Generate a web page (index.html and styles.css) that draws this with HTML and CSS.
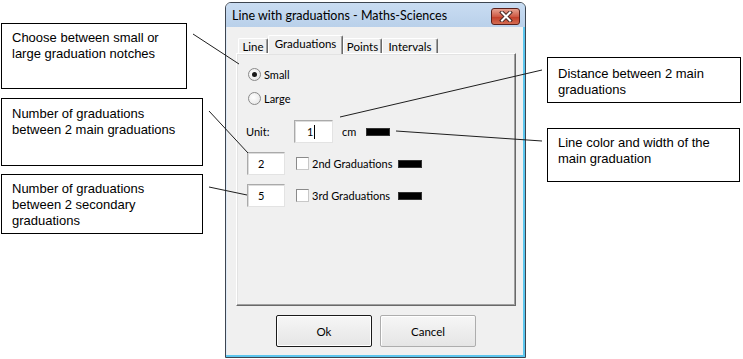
FILE: index.html
```html
<!DOCTYPE html>
<html lang="en">
<head>
    <meta charset="UTF-8">
    <meta name="viewport" content="width=device-width, initial-scale=1.0">
    <title>Line with graduations - Maths-Sciences</title>
    <link rel="stylesheet" href="styles.css">
</head>
<body>
    <div class="canvas">
        <div class="dialog">
            <div class="titlebar">
                <span class="title">Line with graduations - Maths-Sciences</span>
                <div class="close">
                    <svg width="16" height="11" viewBox="0 0 16 11">
                        <path d="M4 1.5 L12 9.5 M12 1.5 L4 9.5" stroke="#4a2a26" stroke-width="4" stroke-linecap="square"/>
                        <path d="M4 1.5 L12 9.5 M12 1.5 L4 9.5" stroke="#ffffff" stroke-width="2" stroke-linecap="square"/>
                    </svg>
                </div>
            </div>
            <div class="client">
                <div class="tabs">
                    <div class="tab tab-line">Line</div>
                    <div class="tab tab-grad active">Graduations</div>
                    <div class="tab tab-points">Points</div>
                    <div class="tab tab-intervals">Intervals</div>
                </div>
                <div class="panel">
                    <div class="radios">
                        <div class="radio-row"><span class="radio checked"></span><span>Small</span></div>
                        <div class="radio-row"><span class="radio"></span><span>Large</span></div>
                    </div>
                    <div class="row unit-row">
                        <span class="unit-label">Unit:</span>
                        <span class="field field-unit">1<span class="caret"></span></span>
                        <span class="cm">cm</span>
                        <span class="swatch"></span>
                    </div>
                    <div class="row">
                        <span class="field">2</span>
                        <span class="check"></span>
                        <span class="check-label">2nd Graduations</span>
                        <span class="swatch"></span>
                    </div>
                    <div class="row">
                        <span class="field">5</span>
                        <span class="check"></span>
                        <span class="check-label">3rd Graduations</span>
                        <span class="swatch"></span>
                    </div>
                </div>
                <div class="buttons">
                    <div class="btn default">Ok</div>
                    <div class="btn">Cancel</div>
                </div>
            </div>
        </div>

        <div class="note note-notches">Choose between small or large graduation notches</div>
        <div class="note note-main">Number of graduations between 2 main graduations</div>
        <div class="note note-secondary">Number of graduations between 2 secondary graduations</div>
        <div class="note note-distance">Distance between 2 main graduations</div>
        <div class="note note-color">Line color and width of the main graduation</div>

        <!-- leader lines from the notes to the controls -->
        <svg class="leaders" width="743" height="359">
            <line x1="193" y1="34" x2="239" y2="64"/>
            <line x1="209" y1="111" x2="248" y2="153"/>
            <line x1="209" y1="187" x2="247" y2="195"/>
            <line x1="340" y1="117" x2="542" y2="70"/>
            <line x1="396" y1="131" x2="542" y2="141"/>
        </svg>
    </div>
</body>
</html>
```

FILE: styles.css
```css
body {
    margin: 0;
    background-color: #fff;
    font-family: "Liberation Sans", Arial, sans-serif;
    color: #000;
}
.canvas {
    position: relative;
    width: 743px;
    height: 359px;
    overflow: hidden;
}

/* dialog window */
.dialog {
    position: absolute;
    left: 225px;
    top: 2px;
    width: 301px;
    height: 356px;
    box-sizing: border-box;
    border: 1px solid #3d4550;
    border-radius: 6px 6px 0 0;
    background-color: #f0f0f0;
    box-shadow: inset -2px -2px 0 #5cc6ee, inset 1px 0 0 #dfeaf6;
    font-family: Lato, "Liberation Sans", sans-serif;
    font-size: 11px;
    display: flex;
    flex-direction: column;
}
.titlebar {
    height: 24px;
    flex: none;
    display: flex;
    align-items: center;
    padding-left: 6px;
    border-radius: 5px 5px 0 0;
    background: linear-gradient(#c9dcf2, #b9d0ea);
}
.title {
    font-size: 12.5px;
    color: #000;
}
.close {
    margin-left: auto;
    margin-right: 5px;
    margin-top: 3px;
    width: 29px;
    height: 17px;
    box-sizing: border-box;
    border: 1px solid #5a1f1a;
    border-radius: 3px;
    background: linear-gradient(#e6a291, #cf5a45 50%, #c13c27 51%, #d36b51);
    display: flex;
    align-items: center;
    justify-content: center;
}
.client {
    flex: 1;
    padding: 8px 9px 0 10px;
    display: flex;
    flex-direction: column;
}

/* tabs */
.tabs {
    height: 18px;
    display: flex;
    align-items: flex-end;
    padding-left: 2px;
    position: relative;
    z-index: 1;
}
.tab {
    height: 15px;
    box-sizing: border-box;
    border-top: 1px solid #fff;
    border-left: 1px solid #fff;
    border-right: 1px solid #696969;
    box-shadow: inset -1px 0 0 #a0a0a0;
    border-radius: 2px 2px 0 0;
    display: flex;
    align-items: center;
    justify-content: center;
    padding-top: 1px;
    font-size: 11.5px;
}
.tab-line { width: 30px; }
.tab-grad { width: 75px; }
.tab-points { width: 39px; }
.tab-intervals { width: 56px; }
.tab.active {
    height: 19px;
    margin-bottom: -1px;
    background-color: #f0f0f0;
    padding-top: 0;
    padding-bottom: 3px;
}

.panel {
    height: 253px;
    box-sizing: border-box;
    border-top: 1px solid #fff;
    border-left: 1px solid #fff;
    border-right: 1px solid #696969;
    border-bottom: 1px solid #696969;
    box-shadow: inset -1px -1px 0 #a0a0a0, inset 1px 1px 0 #e3e3e3;
    padding: 12px 0 0 9px;
}
.radios {
    display: flex;
    flex-direction: column;
    gap: 8px;
    margin-left: 2px;
}
.radio-row {
    height: 16px;
    display: flex;
    align-items: center;
    gap: 3px;
}
.radio {
    width: 13px;
    height: 13px;
    box-sizing: border-box;
    border-radius: 50%;
    border: 1px solid #8a8a8a;
    background: radial-gradient(circle at 40% 40%, #ffffff, #e2e2e2);
    display: flex;
    align-items: center;
    justify-content: center;
}
.radio.checked::after {
    content: "";
    width: 5px;
    height: 5px;
    border-radius: 50%;
    background-color: #1a1a1a;
}
.row {
    height: 23px;
    display: flex;
    align-items: center;
    margin-top: 9px;
}
.unit-row {
    margin-top: 14px;
}
.unit-label {
    width: 48px;
}
.field {
    width: 38px;
    height: 23px;
    box-sizing: border-box;
    margin-left: 1px;
    background-color: #fff;
    border: 1px solid #aaa;
    border-right-color: #e3e3e3;
    border-bottom-color: #e3e3e3;
    box-shadow: inset 1px 1px 0 #dcdcdc;
    display: flex;
    align-items: center;
    padding-left: 10px;
}
.field-unit {
    width: 39px;
    margin-left: 0;
    padding-left: 12px;
}
.caret {
    width: 1px;
    height: 14px;
    margin-left: 1px;
    background-color: #000;
}
.cm {
    margin-left: 9px;
    width: 24px;
}
.check {
    width: 13px;
    height: 13px;
    box-sizing: border-box;
    margin-left: 11px;
    border: 1px solid #8a8a8a;
    border-right-color: #c8c8c8;
    border-bottom-color: #c8c8c8;
    background-color: #fff;
}
.check-label {
    margin-left: 3px;
    width: 86px;
}
.swatch {
    width: 24px;
    height: 8px;
    box-sizing: border-box;
    background-color: #000;
    border: 1px solid #333;
}

/* buttons */
.buttons {
    display: flex;
    justify-content: center;
    gap: 8px;
    margin-top: 9px;
}
.btn {
    width: 96px;
    height: 32px;
    box-sizing: border-box;
    border: 1px solid #adadad;
    box-shadow: inset 1px 1px 0 #fff;
    border-radius: 2px;
    background: linear-gradient(#f6f6f6, #e5e5e5);
    display: flex;
    align-items: center;
    justify-content: center;
    font-size: 11.5px;
}
.btn.default {
    border-color: #1a1a1a;
    box-shadow: inset 0 0 0 1px #fff;
}

/* annotation notes */
.note {
    position: absolute;
    box-sizing: border-box;
    border: 1px solid #000;
    background-color: #fff;
    font-size: 13px;
    line-height: 16px;
    padding: 6px 10px;
}
.note-notches { left: 1px; top: 23px; width: 186px; height: 66px; }
.note-main { left: 1px; top: 98px; width: 202px; height: 68px; padding-top: 7px; }
.note-secondary { left: 1px; top: 174px; width: 202px; height: 60px; padding-top: 6px; }
.note-distance { left: 547px; top: 57px; width: 194px; height: 46px; padding-top: 8px; }
.note-color { left: 547px; top: 128px; width: 193px; height: 54px; padding-top: 6px; }

.leaders {
    position: absolute;
    left: 0;
    top: 0;
    pointer-events: none;
}
.leaders line {
    stroke: #1e1e1e;
    stroke-width: 1;
}
```
